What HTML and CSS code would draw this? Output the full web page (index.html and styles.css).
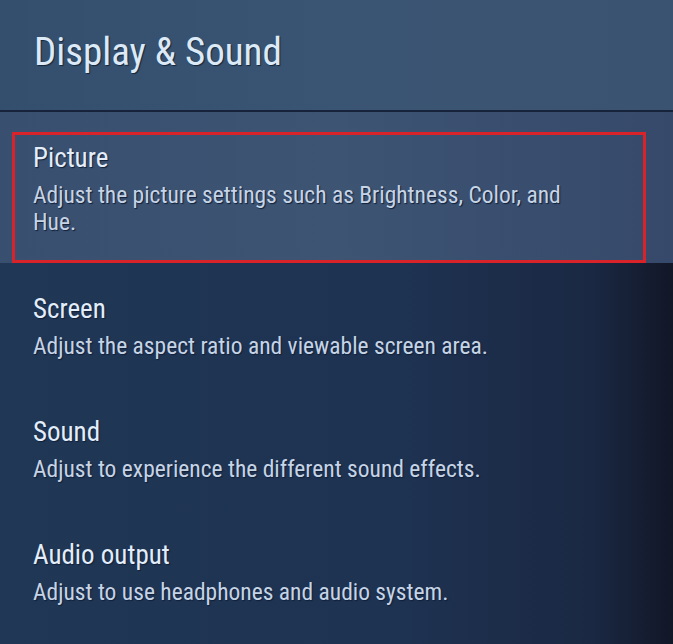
FILE: index.html
```html
<!DOCTYPE html>
<html lang="en">
<head>
<meta charset="utf-8">
<title>Display &amp; Sound</title>
<link rel="stylesheet" href="styles.css">
</head>
<body>
<main class="screen">
  <header class="head">
    <h1 class="head-title">Display &amp; Sound</h1>
  </header>
  <ul class="menu">
    <li class="item item-selected">
      <div class="focus">
        <div class="item-title">Picture</div>
        <div class="item-desc">Adjust the picture settings such as Brightness, Color, and Hue.</div>
      </div>
    </li>
    <li class="item">
      <div class="item-title">Screen</div>
      <div class="item-desc">Adjust the aspect ratio and viewable screen area.</div>
    </li>
    <li class="item">
      <div class="item-title">Sound</div>
      <div class="item-desc">Adjust to experience the different sound effects.</div>
    </li>
    <li class="item">
      <div class="item-title">Audio output</div>
      <div class="item-desc">Adjust to use headphones and audio system.</div>
    </li>
  </ul>
</main>
</body>
</html>
```
FILE: styles.css
```css
html, body {
  margin: 0;
  padding: 0;
}
body {
  width: 673px;
  height: 644px;
  overflow: hidden;
  background: #1b2d49;
  font-family: "Roboto Condensed", "Liberation Sans Narrow", Roboto, sans-serif;
}
.screen {
  height: 644px;
  display: flex;
  flex-direction: column;
  background: linear-gradient(90deg, #203756 0%, #1e3251 60%, #1a2843 88%, #121727 100%);
}
.head {
  height: 112px;
  flex-shrink: 0;
  box-sizing: border-box;
  padding: 29px 0 0 34px;
  background: linear-gradient(90deg, #344f6d 0%, #3a5573 50%, #3a5371 100%);
  border-bottom: 2px solid #17233a;
  box-shadow: 0 1px 2px rgba(10, 16, 30, 0.6);
}
.head-title {
  margin: 0;
  font-size: 39px;
  line-height: 46px;
  font-weight: 400;
  color: #dce9f7;
  text-shadow: 1px 1px 1px #14243c;
}
.menu {
  list-style: none;
  margin: 0;
  padding: 0;
}
.item {
  padding: 29px 20px 26px 33px;
}
.item-selected {
  padding: 20px 27px 0 12px;
  background: linear-gradient(90deg, #394f6f 0%, #3d5473 50%, #36496a 100%);
}
.focus {
  height: 131px;
  box-sizing: border-box;
  border: 3px solid #d9232b;
  padding: 6px 45px 0 18px;
}
.item-title {
  font-size: 27px;
  line-height: 34px;
  color: #e3eefa;
  text-shadow: 1px 1px 1px #10203a;
}
.item-desc {
  margin-top: 7px;
  font-size: 23.5px;
  line-height: 27px;
  color: #c6d4e6;
  text-shadow: 1px 1px 1px #10203a;
}
```
